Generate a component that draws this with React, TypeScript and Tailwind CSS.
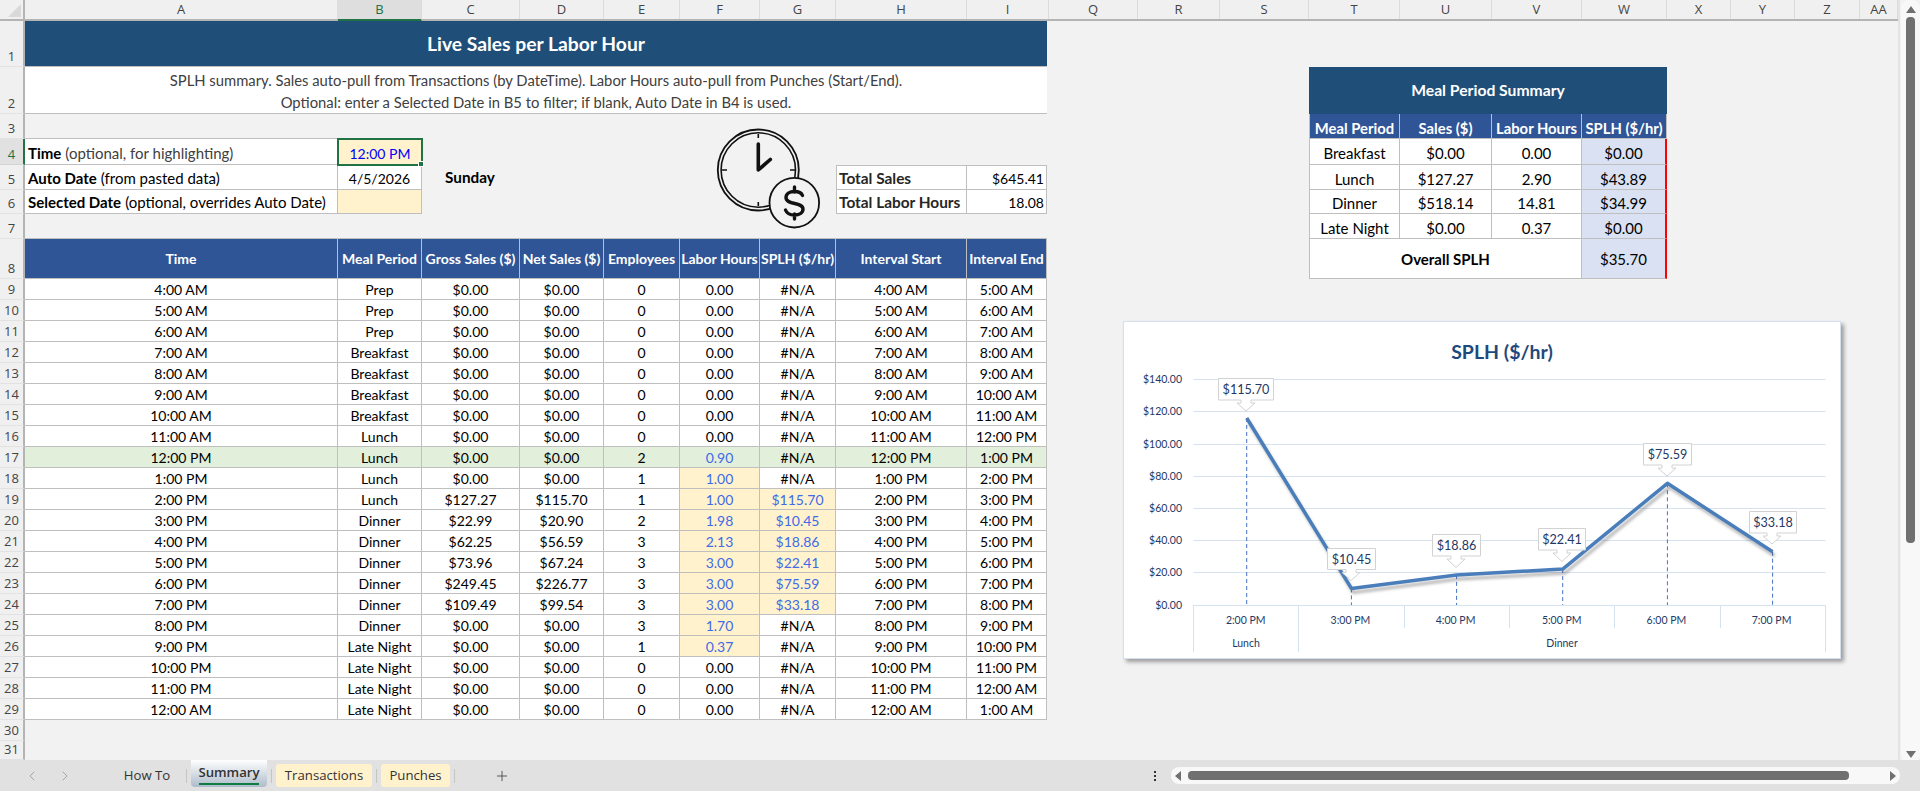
import { ReactNode } from "react";
import { ChevronLeft, ChevronRight, Plus } from "lucide-react";
import { twMerge } from "tailwind-merge";

const columns: [string, string, boolean?][] = [
  ["A", "w-[313px]"],
  ["B", "w-[84px]", true],
  ["C", "w-[98px]"],
  ["D", "w-[84px]"],
  ["E", "w-[76px]"],
  ["F", "w-[80px]"],
  ["G", "w-[76px]"],
  ["H", "w-[131px]"],
  ["I", "w-[82px]"],
  ["Q", "w-[89px]"],
  ["R", "w-[82px]"],
  ["S", "w-[89px]"],
  ["T", "w-[91px]"],
  ["U", "w-[92px]"],
  ["V", "w-[90px]"],
  ["W", "w-[85px]"],
  ["X", "w-[64px]"],
  ["Y", "w-[64px]"],
  ["Z", "w-[65px]"],
  ["AA", "w-[38px]"],
];

// time, meal, gross, net, employees, hours, splh, start, end
const rows: string[][] = [
  ["4:00 AM", "Prep", "$0.00", "$0.00", "0", "0.00", "#N/A", "4:00 AM", "5:00 AM"],
  ["5:00 AM", "Prep", "$0.00", "$0.00", "0", "0.00", "#N/A", "5:00 AM", "6:00 AM"],
  ["6:00 AM", "Prep", "$0.00", "$0.00", "0", "0.00", "#N/A", "6:00 AM", "7:00 AM"],
  ["7:00 AM", "Breakfast", "$0.00", "$0.00", "0", "0.00", "#N/A", "7:00 AM", "8:00 AM"],
  ["8:00 AM", "Breakfast", "$0.00", "$0.00", "0", "0.00", "#N/A", "8:00 AM", "9:00 AM"],
  ["9:00 AM", "Breakfast", "$0.00", "$0.00", "0", "0.00", "#N/A", "9:00 AM", "10:00 AM"],
  ["10:00 AM", "Breakfast", "$0.00", "$0.00", "0", "0.00", "#N/A", "10:00 AM", "11:00 AM"],
  ["11:00 AM", "Lunch", "$0.00", "$0.00", "0", "0.00", "#N/A", "11:00 AM", "12:00 PM"],
  ["12:00 PM", "Lunch", "$0.00", "$0.00", "2", "0.90", "#N/A", "12:00 PM", "1:00 PM"],
  ["1:00 PM", "Lunch", "$0.00", "$0.00", "1", "1.00", "#N/A", "1:00 PM", "2:00 PM"],
  ["2:00 PM", "Lunch", "$127.27", "$115.70", "1", "1.00", "$115.70", "2:00 PM", "3:00 PM"],
  ["3:00 PM", "Dinner", "$22.99", "$20.90", "2", "1.98", "$10.45", "3:00 PM", "4:00 PM"],
  ["4:00 PM", "Dinner", "$62.25", "$56.59", "3", "2.13", "$18.86", "4:00 PM", "5:00 PM"],
  ["5:00 PM", "Dinner", "$73.96", "$67.24", "3", "3.00", "$22.41", "5:00 PM", "6:00 PM"],
  ["6:00 PM", "Dinner", "$249.45", "$226.77", "3", "3.00", "$75.59", "6:00 PM", "7:00 PM"],
  ["7:00 PM", "Dinner", "$109.49", "$99.54", "3", "3.00", "$33.18", "7:00 PM", "8:00 PM"],
  ["8:00 PM", "Dinner", "$0.00", "$0.00", "3", "1.70", "#N/A", "8:00 PM", "9:00 PM"],
  ["9:00 PM", "Late Night", "$0.00", "$0.00", "1", "0.37", "#N/A", "9:00 PM", "10:00 PM"],
  ["10:00 PM", "Late Night", "$0.00", "$0.00", "0", "0.00", "#N/A", "10:00 PM", "11:00 PM"],
  ["11:00 PM", "Late Night", "$0.00", "$0.00", "0", "0.00", "#N/A", "11:00 PM", "12:00 AM"],
  ["12:00 AM", "Late Night", "$0.00", "$0.00", "0", "0.00", "#N/A", "12:00 AM", "1:00 AM"],
];

const tableHeaders = ["Time", "Meal Period", "Gross Sales ($)", "Net Sales ($)", "Employees", "Labor Hours", "SPLH ($/hr)", "Interval Start", "Interval End"];

const summaryRows = [
  ["Breakfast", "$0.00", "0.00", "$0.00"],
  ["Lunch", "$127.27", "2.90", "$43.89"],
  ["Dinner", "$518.14", "14.81", "$34.99"],
  ["Late Night", "$0.00", "0.37", "$0.00"],
];

function Cell({ children, className = "" }: { children?: ReactNode; className?: string }) {
  return (
    <div
      className={twMerge(
        "flex items-center justify-center overflow-hidden whitespace-nowrap border-r border-b border-[#bfbfbf] bg-white text-[14px] text-black",
        className
      )}
    >
      {children}
    </div>
  );
}

function RowNum({ n, active }: { n: number; active?: boolean }) {
  return (
    <div
      className={`flex items-end justify-center border-r-2 border-b font-['Open_Sans',sans-serif] text-[13px] leading-[20px] ${
        active ? "border-r-[#217346] border-b-[#d4d4d4] bg-[#e1e1e1] text-[#217346]" : "border-r-[#b4b4b4] border-b-[#e2e2e2] bg-[#f0f0f0] text-[#444444]"
      }`}
    >
      {n}
    </div>
  );
}

function Callout({ x0, x1, y0, y1, tip, cx, label }: { x0: number; x1: number; y0: number; y1: number; tip: number; cx: number; label: string }) {
  const d = `M${x0} ${y0}H${x1}V${y1}H${cx + 5}V${y1 + 3}H${cx + 9}L${cx} ${tip}L${cx - 9} ${y1 + 3}H${cx - 5}V${y1}H${x0}Z`;
  return (
    <g>
      <path d={d} fill="#ffffff" stroke="#d2d2d2" strokeWidth="1" />
      <text x={(x0 + x1) / 2} y={y0 + 15.5} textAnchor="middle" fontSize="12.6" fill="#1f3864">
        {label}
      </text>
    </g>
  );
}

function SplhChart() {
  const grid = [
    ["$140.00", 379.5],
    ["$120.00", 411.5],
    ["$100.00", 444.5],
    ["$80.00", 476.5],
    ["$60.00", 508.5],
    ["$40.00", 540.5],
    ["$20.00", 572.5],
    ["$0.00", 605.5],
  ] as const;
  const pts = [
    [1246.7, 418],
    [1351.4, 588.4],
    [1456.6, 574.9],
    [1562.7, 569.1],
    [1667.4, 483.3],
    [1772.6, 551.7],
  ];
  const line = pts.map((p) => p.join(",")).join(" ");
  const cats = ["2:00 PM", "3:00 PM", "4:00 PM", "5:00 PM", "6:00 PM", "7:00 PM"];
  return (
    <div className="absolute left-[1123px] top-[321px] h-[338px] w-[718px] border border-[#d5e0ef] bg-white shadow-[3px_3px_4px_rgba(0,0,0,0.35)]">
      <svg viewBox="1124 322 716 336" className="block h-[336px] w-[716px]">
        <defs>
          <filter id="lineShadow" x="-5%" y="-5%" width="110%" height="115%">
            <feGaussianBlur stdDeviation="1.6" />
          </filter>
        </defs>
        <text x="1502" y="359" textAnchor="middle" fontSize="19.5" fontWeight="700" fill="#1f497d">
          SPLH ($/hr)
        </text>
        {grid.map(([label, y]) => (
          <g key={label}>
            <line x1="1193.5" x2="1825.5" y1={y} y2={y} stroke="#d5e3f1" strokeWidth="1" />
            <text x="1182" y={y + 3.5} textAnchor="end" fontSize="10.5" fill="#1f3864">
              {label}
            </text>
          </g>
        ))}
        {pts.map(([x, y]) => (
          <line key={x} x1={x} x2={x} y1={y} y2="605" stroke="#4472c4" strokeWidth="1" strokeDasharray="4 3" />
        ))}
        {[1298.5, 1404.5, 1509.5, 1614.5, 1720.5].map((x) => (
          <line key={x} x1={x} x2={x} y1="605" y2="628" stroke="#d5e3f1" />
        ))}
        {[1193.5, 1298.5, 1825.5].map((x) => (
          <line key={x} x1={x} x2={x} y1="605" y2="652" stroke="#d5e3f1" />
        ))}
        {cats.map((c, i) => (
          <text key={c} x={pts[i][0] - 1} y="624" textAnchor="middle" fontSize="10.5" fill="#1f3864">
            {c}
          </text>
        ))}
        <text x="1246" y="647" textAnchor="middle" fontSize="10.5" fill="#1f3864">
          Lunch
        </text>
        <text x="1562" y="647" textAnchor="middle" fontSize="10.5" fill="#1f3864">
          Dinner
        </text>
        <polyline points={line} fill="none" stroke="#000000" strokeOpacity="0.3" strokeWidth="3" transform="translate(2 4)" filter="url(#lineShadow)" />
        <polyline points={line} fill="none" stroke="#4a7ebb" strokeWidth="3.5" strokeLinejoin="round" />
        <Callout x0={1218.5} x1={1273.5} y0={378.5} y1={400} tip={411} cx={1246} label="$115.70" />
        <Callout x0={1327.5} x1={1375.5} y0={548.5} y1={569.5} tip={580.5} cx={1351} label="$10.45" />
        <Callout x0={1432.5} x1={1480.5} y0={534.5} y1={556} tip={567.5} cx={1456} label="$18.86" />
        <Callout x0={1538.5} x1={1585.5} y0={528.5} y1={550} tip={561.5} cx={1562} label="$22.41" />
        <Callout x0={1643.5} x1={1691.5} y0={443.5} y1={465} tip={476} cx={1667} label="$75.59" />
        <Callout x0={1749.5} x1={1796.5} y0={511.5} y1={533} tip={544} cx={1772} label="$33.18" />
      </svg>
    </div>
  );
}

function ClockIcon() {
  return (
    <svg viewBox="700 120 130 115" className="absolute left-[700px] top-[120px] h-[115px] w-[130px]" fill="none" stroke="#111111">
      <circle cx="758.3" cy="170" r="40.5" strokeWidth="1.8" />
      <circle cx="758.3" cy="170" r="37.2" strokeWidth="1.6" />
      <path d="M758.3 134v4M758.3 202v4M722 170h5M790 170h5" strokeWidth="1.6" />
      <path d="M758.3 144v26l12-10.5" strokeWidth="3.6" strokeLinecap="round" strokeLinejoin="round" />
      <circle cx="794.3" cy="202.7" r="24.8" fill="#f2f2f2" strokeWidth="1.8" />
      <path d="M802.500 195.500c-1-2.600-4-4-8-4-5 0-8.500 2.500-8.500 6 0 8 17 4 17 11.500 0 3.500-3.500 6-8.500 6-4.500 0-7.800-1.800-9-5M794.500 187v5M794.500 214v5" strokeWidth="3.4" strokeLinecap="round" />
    </svg>
  );
}

function SheetTab({ label }: { label: string }) {
  return <div className="flex h-[23px] items-center justify-center rounded-[3px] bg-[#fff2cc] px-[9px]">{label}</div>;
}

export default function App() {
  return (
    <div className="flex h-[791px] w-[1920px] flex-col overflow-hidden bg-[#f2f2f2] font-[Lato,sans-serif] text-black">
      <div className="flex h-[760px]">
        <div className="relative w-[1898px] overflow-hidden">
          {/* column letters */}
          <div className="flex h-[21px] border-b-2 border-[#b4b4b4] bg-[#f0f0f0] font-['Open_Sans',sans-serif] text-[13px] leading-[21px] text-[#444444]">
            <div className="flex w-[25px] items-end justify-end border-r-2 border-[#b4b4b4] pr-[2px] pb-[2px]">
              <div className="h-0 w-0 border-b-[13px] border-l-[13px] border-b-[#d9d9d9] border-l-transparent" />
            </div>
            {columns.map(([label, w, active]) => (
              <div
                key={label}
                className={`flex items-center justify-center border-r border-[#dcdcdc] ${w} ${active ? "-mb-[2px] border-b-2 border-b-[#217346] bg-[#dedede] text-[#217346]" : ""}`}
              >
                {label}
              </div>
            ))}
          </div>

          <div className="flex">
            {/* main sheet */}
            <div className="grid w-[1047px] grid-cols-[25px_313px_84px_98px_84px_76px_80px_76px_131px_80px] grid-rows-[46px_47px_25px_26px_25px_24px_25px_40px_repeat(21,21px)_21px_19px]">
              <RowNum n={1} />
              <div className="col-span-9 flex items-center justify-center border-b border-[#bfbfbf] bg-[#1f4e78] pt-[2px] text-[19.3px] font-bold text-white">
                Live Sales per Labor Hour
              </div>

              <RowNum n={2} />
              <div className="col-span-9 flex flex-col items-center justify-center border-b border-[#bfbfbf] bg-white pt-[2px] text-[14.8px] leading-[22px] text-[#404040]">
                <span>SPLH summary. Sales auto-pull from Transactions (by DateTime). Labor Hours auto-pull from Punches (Start/End).</span>
                <span>Optional: enter a Selected Date in B5 to filter; if blank, Auto Date in B4 is used.</span>
              </div>

              <RowNum n={3} />
              <div className="col-span-2 border-b border-[#bfbfbf]" />
              <div className="col-span-7" />

              <RowNum n={4} active />
              <Cell className="justify-start pt-[4px] pl-[3px] text-[15px] text-[#404040]">
                <b className="mr-1 text-black">Time</b> (optional, for highlighting)
              </Cell>
              <div className="relative -m-px flex items-center justify-center border-2 border-[#217346] bg-[#fff2cc] pt-[3px] text-[14px] text-[#0000ff]">
                12:00 PM
                <span className="absolute -right-[3px] -bottom-[3px] h-[6px] w-[6px] border border-white bg-[#217346]" />
              </div>
              <div className="col-span-7" />

              <RowNum n={5} />
              <Cell className="justify-start pt-[3px] pl-[3px] text-[15px]">
                <b className="mr-1">Auto Date</b> (from pasted data)
              </Cell>
              <Cell className="pt-[3px]">4/5/2026</Cell>
              <div className="flex items-center pl-[23px] text-[15.3px] font-bold">Sunday</div>
              <div className="col-span-4" />
              <Cell className="justify-start border-t border-l pt-[2px] pl-[2px] text-[15.4px] font-bold text-[#262626]">Total Sales</Cell>
              <Cell className="justify-end border-t pt-[2px] pr-[2px]">$645.41</Cell>

              <RowNum n={6} />
              <Cell className="justify-start pt-[1px] pl-[3px] text-[15px]">
                <b className="mr-1">Selected Date</b> (optional, overrides Auto Date)
              </Cell>
              <Cell className="bg-[#fff2cc]" />
              <div className="col-span-5" />
              <Cell className="justify-start border-l pt-[2px] pl-[2px] text-[15.4px] font-bold text-[#262626]">Total Labor Hours</Cell>
              <Cell className="justify-end pt-[2px] pr-[2px]">18.08</Cell>

              <RowNum n={7} />
              <div className="col-span-9 border-b border-[#bfbfbf]" />

              <RowNum n={8} />
              {tableHeaders.map((h) => (
                <Cell key={h} className="bg-[#2f5597] text-[14px] font-bold text-white">
                  {h}
                </Cell>
              ))}

              {rows.map((row, i) => {
                const now = row[0] === "12:00 PM";
                const hoursOn = row[5] !== "0.00";
                const splhOn = row[6] !== "#N/A";
                return [
                  <RowNum key={`n${i}`} n={i + 9} />,
                  ...row.map((value, c) => {
                    let tone = now ? "bg-[#e2efda]" : "";
                    if (c === 5 && hoursOn) tone = now ? "bg-[#e2efda] text-[#3f6be8]" : "bg-[#fff2cc] text-[#3f6be8]";
                    if (c === 6 && splhOn) tone = "bg-[#fff2cc] text-[#3f6be8]";
                    return (
                      <Cell key={`${i}-${c}`} className={tone}>
                        {value}
                      </Cell>
                    );
                  }),
                ];
              })}

              <RowNum n={30} />
              <div className="col-span-9" />
              <RowNum n={31} />
              <div className="col-span-9" />
            </div>

            {/* right side summary */}
            <div className="pt-[46px] pl-[262px]">
              <div className="grid w-[358px] grid-cols-[91px_92px_90px_85px] grid-rows-[47px_25px_26px_25px_24px_25px_40px]">
                <div className="col-span-4 flex items-center justify-center bg-[#1f4e78] text-[15.7px] font-bold text-white">
                  Meal Period Summary
                </div>
                {["Meal Period", "Sales ($)", "Labor Hours", "SPLH ($/hr)"].map((h, i) => (
                  <Cell key={h} className={`bg-[#2f5597] pt-[3px] text-[14.8px] leading-[18px] font-bold text-white ${i === 0 ? "border-l" : ""}`}>
                    {h}
                  </Cell>
                ))}
                {summaryRows.map((row) =>
                  row.map((value, c) => (
                    <Cell
                      key={`${row[0]}-${c}`}
                      className={`pt-[3px] text-[15px] leading-[18px] ${c === 0 ? "border-l" : c === 3 ? "border-r-2 border-r-[#ff0000] bg-[#d9e1f2]" : ""}`}
                    >
                      {value}
                    </Cell>
                  ))
                )}
                <Cell className="col-span-3 border-l pt-[2px] text-[15px] font-bold">Overall SPLH</Cell>
                <Cell className="border-r-2 border-r-[#ff0000] bg-[#d9e1f2] pt-[2px] text-[15px]">$35.70</Cell>
              </div>
            </div>
          </div>

          <ClockIcon />
          <SplhChart />
        </div>

        {/* vertical scrollbar */}
        <div className="flex w-[22px] justify-end border-l-2 border-[#e3e3e3] bg-[#f2f2f2]">
          <div className="flex h-[763px] w-[19px] flex-col items-center rounded-[8px] bg-[#f8f8f8] pt-[6px]">
            <div className="h-0 w-0 border-x-[5px] border-b-[7px] border-x-transparent border-b-[#707070]" />
            <div className="mt-[4px] h-[526px] w-[9px] rounded-[4px] bg-[#707070]" />
            <div className="flex-1" />
            <div className="mb-[5px] h-0 w-0 border-x-[5px] border-t-[7px] border-x-transparent border-t-[#707070]" />
          </div>
        </div>
      </div>

      {/* sheet tabs */}
      <div className="flex h-[31px] items-center bg-[#e1e1e1] font-['Open_Sans',sans-serif] text-[13.2px] text-[#333333]">
        <ChevronLeft size={16} strokeWidth={1.3} className="ml-[24px] text-[#9a9a9a]" />
        <ChevronRight size={16} strokeWidth={1.3} className="ml-[17px] text-[#9a9a9a]" />
        <div className="ml-[39px] w-[70px] text-center">How To</div>
        <div className="ml-[4px] h-[14px] w-px bg-[#c4c4c4]" />
        <div className="mx-[4px] flex h-[27px] w-[76px] flex-col items-center self-start rounded-b-[4px] bg-gradient-to-b from-[#ffffff] to-[#aebccb] font-semibold">
          <span className="mt-[3px] leading-[18px]">Summary</span>
          <span className="mt-[2px] h-[2px] w-[60px] bg-[#107c41]" />
        </div>
        <div className="h-[14px] w-px bg-[#c4c4c4]" />
        <div className="ml-[4px] w-[96px] text-center">
          <SheetTab label="Transactions" />
        </div>
        <div className="mx-[4px] h-[14px] w-px bg-[#c4c4c4]" />
        <div className="w-[69px]">
          <SheetTab label="Punches" />
        </div>
        <div className="ml-[4px] h-[14px] w-px bg-[#c4c4c4]" />
        <Plus size={16} strokeWidth={1.3} className="ml-[39px] text-[#444444]" />
        <div className="ml-auto flex h-[10px] w-[2px] flex-col justify-between">
          <span className="h-[2px] w-[2px] bg-[#333333]" />
          <span className="h-[2px] w-[2px] bg-[#333333]" />
          <span className="h-[2px] w-[2px] bg-[#333333]" />
        </div>
        <div className="mr-[20px] ml-[15px] flex h-[17px] w-[729px] items-center rounded-[8px] bg-[#f8f8f8] px-[4px]">
          <div className="h-0 w-0 border-y-[5px] border-r-[6px] border-y-transparent border-r-[#707070]" />
          <div className="ml-[7px] h-[9px] w-[661px] rounded-[4px] bg-[#707070]" />
          <div className="flex-1" />
          <div className="h-0 w-0 border-y-[5px] border-l-[6px] border-y-transparent border-l-[#707070]" />
        </div>
      </div>
    </div>
  );
}
